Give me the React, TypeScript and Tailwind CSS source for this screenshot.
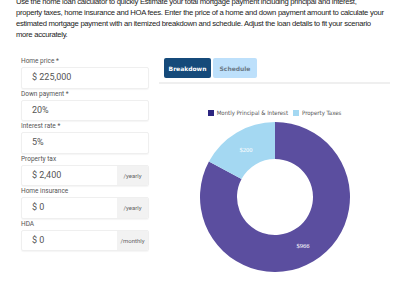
import React from "react";

const fields = [
  { label: "Home price *", value: "$ 225,000" },
  { label: "Down payment *", value: "20%" },
  { label: "Interest rate *", value: "5%" },
  { label: "Property tax", value: "$ 2,400", suffix: "/yearly" },
  { label: "Home insurance", value: "$ 0", suffix: "/yearly" },
  { label: "HDA", value: "$ 0", suffix: "/monthly" },
];

function Donut() {
  return (
    <svg width="150" height="150" viewBox="0 0 150 150">
      <path
        d="M75 0 A75 75 0 1 1 8.93 39.5 L41.53 57.01 A38 38 0 1 0 75 37 Z"
        fill="#5b4e9f"
      />
      <path
        d="M8.93 39.5 A75 75 0 0 1 75 0 L75 37 A38 38 0 0 0 41.53 57.01 Z"
        fill="#a4d8f2"
      />
      <text x="103" y="126" fill="#fff" fontSize="6.5" fontFamily="'Liberation Serif', serif" textAnchor="middle">
        $966
      </text>
      <text x="46" y="30" fill="#fff" fontSize="6.5" fontFamily="'Liberation Serif', serif" textAnchor="middle">
        $200
      </text>
    </svg>
  );
}

export default function App() {
  return (
    <div className="w-[400px] h-[284px] overflow-hidden bg-white">
      <div className="-mt-[4px]">
        {/* Intro */}
        <p className="pl-4 pr-1 text-[7.7px] leading-[11px] tracking-[-0.3px] text-[#222] whitespace-nowrap font-['Liberation_Sans',Arial,sans-serif]">
          Use the home loan calculator to quickly Estimate your total mortgage payment including principal and interest,
          <br />
          property taxes, home insurance and HOA fees. Enter the price of a home and down payment amount to calculate your
          <br />
          estimated mortgage payment with an itemized breakdown and schedule. Adjust the loan details to fit your scenario
          <br />
          more accurately.
        </p>

        <div className="flex mt-[16px] pl-[21px] gap-[10px]">
          {/* Inputs */}
          <div className="w-[128px] flex flex-col font-['Roboto',sans-serif]">
            {fields.map((f) => (
              <div key={f.label} className="h-[32.5px] flex flex-col">
                <div className="h-[11px] text-[6.5px] leading-[11px] text-[#555]">{f.label}</div>
                <div className="h-[21.5px] flex rounded-[2px] border border-[#efefef] shadow-[0_1px_1px_rgba(0,0,0,0.04)] overflow-hidden">
                  <div className="flex-1 flex items-center pl-[10px] text-[9px] text-[#555]">{f.value}</div>
                  {f.suffix && (
                    <div className="w-[31px] flex items-center justify-center bg-[#f2f2f2] text-[6px] text-[#666]">
                      {f.suffix}
                    </div>
                  )}
                </div>
              </div>
            ))}
          </div>

          {/* Results */}
          <div className="w-[231px] flex flex-col">
            <div className="flex gap-[2px] pl-[5px] pt-[2px] font-['DejaVu_Sans',sans-serif]">
              <button className="w-[47px] h-[20px] rounded-[2px] bg-[#154a7a] text-white text-[6px] font-bold">
                Breakdown
              </button>
              <button className="w-[44px] h-[20px] rounded-[2px] bg-[#bde0fb] text-[#6b7a88] text-[6px] font-bold">
                Schedule
              </button>
            </div>
            <div className="mt-[4px] h-[2px] bg-[#efefef]" />

            <div className="mt-[24px] flex justify-center items-center gap-[3px] text-[6px] text-[#555] font-['DejaVu_Sans_Condensed','DejaVu_Sans',sans-serif]">
              <span className="w-[6px] h-[6px] bg-[#2c2580]" />
              <span>Montly Principal &amp; Interest</span>
              <span className="w-[6px] h-[6px] bg-[#a4d8f2] ml-[2px]" />
              <span>Property Taxes</span>
            </div>

            <div className="mt-[5px] flex justify-center">
              <Donut />
            </div>
          </div>
        </div>
      </div>
    </div>
  );
}
